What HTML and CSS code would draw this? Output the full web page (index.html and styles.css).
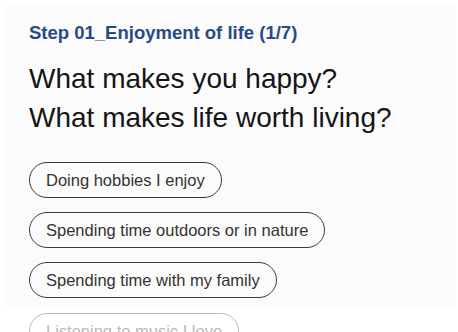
FILE: index.html
```html
<!DOCTYPE html>
<html>
	<head>
		<meta charset="UTF-8">
		<title>Step 01</title>
		<link rel="stylesheet" href="styles.css">
	</head>
	<body>
		<div class="page">
			<div class="card">
				<p class="step">Step 01_Enjoyment of life (1/7)</p>
				<h1 class="question">What makes you happy?<br>What makes life worth living?</h1>
				<ul class="chips">
					<li>Doing hobbies I enjoy</li>
					<li>Spending time outdoors or in nature</li>
					<li>Spending time with my family</li>
				</ul>
			</div>
			<ul class="chips more">
				<li>Listening to music I love</li>
			</ul>
		</div>
	</body>
</html>
```

FILE: styles.css
```css
*{
	margin: 0;
	padding: 0;
}
html,body{
	width: 458px;
	height: 332px;
	overflow: hidden;
	background: #fff;
	font-family: "Liberation Sans", Arial, sans-serif;
}
.page{
	padding: 5px 3px 0 5px;
}
.card{
	background: #fbfbfb;
	padding: 17px 24px 9px 24px;
	border-radius: 4px;
}
.step{
	font-size: 18.5px;
	font-weight: bold;
	color: #284a86;
	line-height: 22px;
}
.question{
	margin-top: 15px;
	font-size: 28px;
	font-weight: normal;
	color: #151515;
	line-height: 39px;
}
.chips{
	list-style: none;
	display: flex;
	flex-direction: column;
	align-items: flex-start;
	gap: 14px;
	margin-top: 25px;
}
.chips li{
	border: 1px solid #3c3c3c;
	border-radius: 20px;
	padding: 0 16px;
	height: 34px;
	line-height: 34px;
	font-size: 16.5px;
	color: #333;
}
.more{
	margin-top: 6px;
	padding-left: 24px;
	opacity: 0.35;
}
```
